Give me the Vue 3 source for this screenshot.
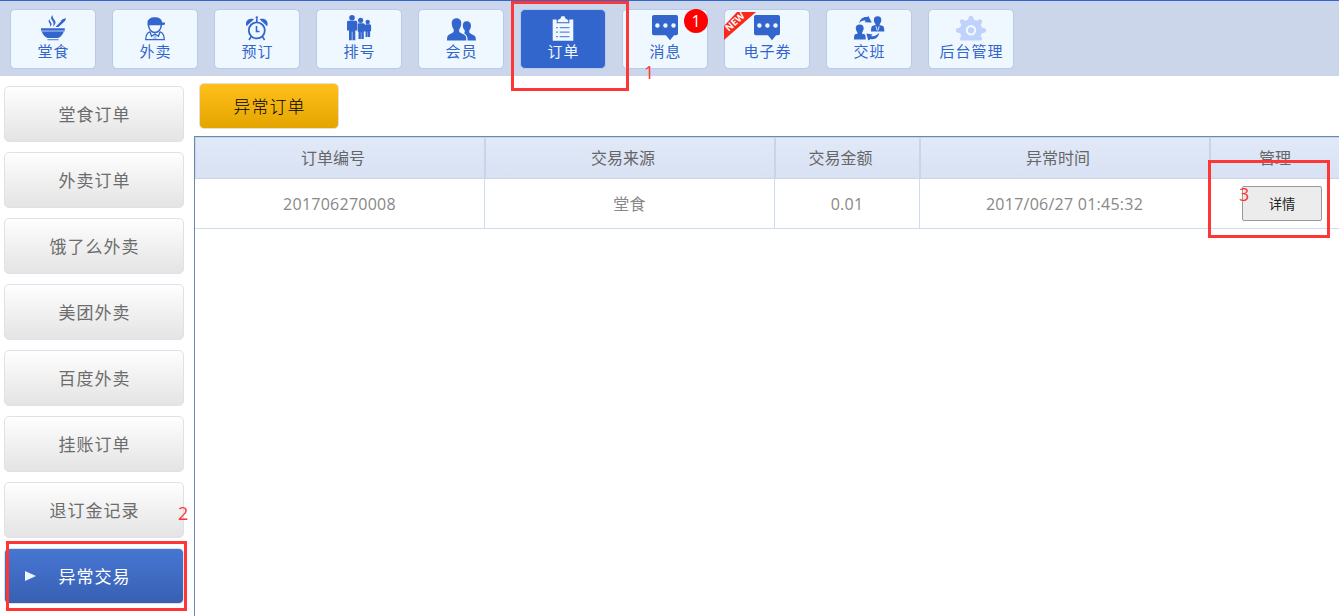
<template>
  <div class="page">
    <header class="top-nav">
      <button
        v-for="item in navItems"
        :key="item.key"
        class="nav-item"
        :class="{ active: item.key === currentNav }"
        @click="currentNav = item.key"
      >
        <svg class="nav-icon" viewBox="0 0 32 28" fill="currentColor">
          <g v-if="item.key === 'dine'">
            <path d="M4 14.200h23.800v2.200H4zM5 18h21.600c-.8 2.700-2.800 4.700-5.400 6H10.600C7.800 22.700 5.800 20.700 5 18z" />
            <path d="M4.300 16.400h23.200v1.600H4.600z" opacity=".65" />
            <path d="M10.500 25h11v1.300h-11z" opacity=".7" />
            <path d="M18.500 13l5.300-5.500c.4-2 2.600-2.600 5-3.500.3 1.700-.8 3.100-3 5L21.500 13z" />
            <path d="M15.500 1c-1.700 2-2 3.400-.6 5.100 1.500 2 2.300 3.600 1 6.700 3.300-2.700 3.200-4.700 1.400-7-1.200-1.600-1.800-2.700-1.800-4.800zM12.500 5c-1.400 1.700-1.100 2.700-.1 4 .7 1.100 1 2 .4 3.700 2.400-1.600 2.200-3 .9-4.700-.8-1-1.200-1.700-1.200-3z" />
          </g>
          <g v-else-if="item.key === 'takeout'">
            <path d="M8.500 11.200V8.700C8.500 5.200 11.500 3.300 16 3.300c4 0 6.800 1.900 7.200 5.100H26v2.200l-3 .7z" />
            <path d="M9.500 11c.2 4.500 3 7.400 6.400 7.400s6.200-2.900 6.400-7.400" fill="none" stroke="currentColor" stroke-width="1.500" />
            <path d="M11 17.800c-3.300.8-4.200 3.600-4.300 7.900h18.600c-.1-4.300-1-7.100-4.300-7.900M11 17.800l1.500 4.400 3.400-2.200 3.600 2.200 1.500-4.400" fill="none" stroke="currentColor" stroke-width="1.300" />
            <path d="M15 20.500h2l1 5h-4z" opacity=".35" />
          </g>
          <g v-else-if="item.key === 'booking'">
            <circle cx="15.800" cy="16.400" r="8" fill="none" stroke="currentColor" stroke-width="1.800" />
            <path d="M5.500 12.300C3.500 7.500 7.500 3.300 13 5.300zM26.100 12.300c2-4.800-2-9-7.500-7z" />
            <path d="M15.800 8.500V4.500M15.500 12v5.500h3M10.200 22.500L8 26M21.400 22.500l2.200 3.500" fill="none" stroke="currentColor" stroke-width="1.600" />
            <circle cx="15.800" cy="3.400" r="1.200" />
          </g>
          <g v-else-if="item.key === 'queue'">
            <circle cx="9" cy="3.700" r="2.800" />
            <path d="M5.500 6.700h7.200c1 0 1.600.7 1.600 1.600v8.300h-2v9.700H9.400v-8.600h-.6v8.600H6v-9.700H4V8.300c0-.9.6-1.600 1.500-1.600z" />
            <circle cx="17.600" cy="6.300" r="2.600" />
            <path d="M15.800 9.200h4.300c1.300 0 1.900.8 1.900 1.800v6.600h-1.200V25h-2.500v-6.800h-.4V25h-2.400v-7l-.7-.3V9.800z" />
            <circle cx="24.700" cy="8" r="2.200" />
            <path d="M23.300 10.300h3c1.200 0 1.800.6 1.800 1.500v5.400h-1V23h-2.200v-5.300h-.3V23h-2v-5.500h-.6v-6.400z" />
          </g>
          <g v-else-if="item.key === 'member'">
            <path d="M11.500 4.300c3.200 0 5.100 2.300 4.700 5.600-.2 2.300-.9 4-2 5.300v2.300c.8 2 5.500 2.700 6.500 4.600.5 1 .6 2.900.6 4.500H2c0-1.600.1-3.500.6-4.500 1-1.900 5.300-2.600 6.100-4.600v-2.300c-1.100-1.300-1.700-3-1.900-5.300-.4-3.300 1.500-5.600 4.700-5.600z" />
            <path d="M21.500 7.200c2.800 0 4.700 1.700 4.500 4.900-.1 1.900-.8 3.300-1.700 4.500v1.900c.8 1.700 4.900 2.200 5.900 4 .5.900.7 2.600.7 4.100h-8.300c0-3.600-.7-5.500-3.300-7l.6-2.900c-1.200-1.300-2-2.700-2.100-4.600-.2-3.200 1.200-4.900 3.700-4.900z" />
          </g>
          <g v-else-if="item.key === 'order'">
            <path d="M5.700 5.500h4v3.800h12.600V5.500h4v21.200H5.700z" />
            <path d="M10.700 8.300V6.200l2.600-1.700c.7-.5.800-1.200 1-2.300h3.400c.2 1.100.3 1.800 1 2.300l2.600 1.700v2.100z" />
            <path d="M9 13.700h1.900M12.700 13.700h9.800M9 18.200h1.900M12.700 18.200h9.800M9 22.600h1.900M12.700 22.600h9.800" stroke="#36c" stroke-width="1.300" opacity=".75" />
          </g>
          <g v-else-if="item.key === 'message' || item.key === 'coupon'">
            <path d="M5 1h22c1.300 0 2 .7 2 2v16.300c0 1.300-.7 2-2 2h-1.900L21 26.200l-4.100-4.900H5c-1.300 0-2-.7-2-2V3c0-1.300.7-2 2-2z" />
            <g fill="#f0f7ff">
              <circle cx="8.400" cy="11.500" r="2.200" />
              <circle cx="16.400" cy="11.500" r="2.200" />
              <circle cx="24.500" cy="11.500" r="2.200" />
            </g>
          </g>
          <g v-else-if="item.key === 'shift'">
            <path d="M6.700 10.500c2.700 0 4.200 1.600 4 4.100-.1 1.500-.7 2.800-1.600 3.900v1.200l2.500.6c1 .5 1.100 3 1.100 5.200H1c0-2.200.2-4.700 1.100-5.200l2.300-.6v-1.200c-.9-1.100-1.500-2.400-1.600-3.900-.2-2.500 1.200-4.100 3.900-4.100z" />
            <path d="M24.600 2.300c2.500 0 3.900 1.500 3.700 3.900-.1 1.600-.7 2.700-1.600 3.700v1l3.300 1c1.100.6 1.300 3.400 1.300 5.500H18c0-2.100.2-4.900 1.200-5.500l3.300-1v-1c-1-1-1.500-2.100-1.600-3.700-.2-2.400 1.200-3.900 3.700-3.900z" />
            <path d="M23 12.300l1.200 4.200M26.200 12.300L25 16.500" fill="none" stroke="#f0f8ff" stroke-width=".9" />
            <path d="M6 9.300C7.300 4.500 10.500 2.300 14.500 3.100l.7-1.300 3.600 6.700-7.200-.2 1.200-1.500C10.300 6 8 7 6 9.300zM26.300 18.800c-.8 4.700-4.200 7.200-8.400 6.300l-2.700 1.500-1.800-7.200 6.200 1.200-1.500 1.500c2.700.8 5.500-.5 8.200-3.300z" />
          </g>
          <g v-else class="gear">
            <path
              d="M12.900 5.700L14.200 2.500c.8-1 2.800-1 3.600 0l1.300 3.200 2.600 1.100 3.200-1.500c1.300 0 2.400 1.100 2.400 2.400l-1.600 3 1.200 2.700 3.500 1.200c1 .8 1 2.800 0 3.600l-3.500 1.200-1.200 2.600 1.500 2.600-.9 1.800H5.700l-.9-1.800 1.500-2.600-1.200-2.600-3.500-1.200c-1-.8-1-2.800 0-3.600l3.500-1.200 1.200-2.700-1.600-3c0-1.300 1.100-2.400 2.400-2.400l3.200 1.500z"
            />
            <circle cx="16" cy="16.300" r="4.200" fill="none" stroke="#f0f8ff" stroke-width="2.100" />
          </g>
        </svg>
        <span class="nav-label">{{ item.label }}</span>
        <span v-if="item.count" class="badge">{{ item.count }}</span>
        <span v-if="item.isNew" class="ribbon"><b>NEW</b></span>
      </button>
    </header>

    <div class="main">
      <aside class="side-menu">
        <button
          v-for="menu in sideMenus"
          :key="menu"
          class="side-item"
          :class="{ active: menu === currentMenu }"
          @click="currentMenu = menu"
        >
          {{ menu }}
        </button>
      </aside>

      <section class="content">
        <div class="toolbar">
          <button class="btn-abnormal">异常订单</button>
        </div>
        <div class="table">
          <div class="row head">
            <div v-for="col in columns" :key="col" class="cell">{{ col }}</div>
          </div>
          <div v-for="order in orders" :key="order.no" class="row">
            <div class="cell">{{ order.no }}</div>
            <div class="cell source">{{ order.source }}</div>
            <div class="cell">{{ order.amount }}</div>
            <div class="cell">{{ order.time }}</div>
            <div class="cell action"><button class="btn-detail">详情</button></div>
          </div>
        </div>
      </section>
    </div>

    <!-- step marks laid over the page -->
    <div class="mark mark-order"></div>
    <div class="mark mark-menu"></div>
    <div class="mark mark-detail"></div>
    <span class="step step-1">1</span>
    <span class="step step-2">2</span>
    <span class="step step-3">3</span>
  </div>
</template>

<script setup>
import { ref } from 'vue'

const currentNav = ref('order')
const currentMenu = ref('异常交易')

const navItems = [
  { key: 'dine', label: '堂食' },
  { key: 'takeout', label: '外卖' },
  { key: 'booking', label: '预订' },
  { key: 'queue', label: '排号' },
  { key: 'member', label: '会员' },
  { key: 'order', label: '订单' },
  { key: 'message', label: '消息', count: 1 },
  { key: 'coupon', label: '电子券', isNew: true },
  { key: 'shift', label: '交班' },
  { key: 'admin', label: '后台管理' },
]

const sideMenus = [
  '堂食订单',
  '外卖订单',
  '饿了么外卖',
  '美团外卖',
  '百度外卖',
  '挂账订单',
  '退订金记录',
  '异常交易',
]

const columns = ['订单编号', '交易来源', '交易金额', '异常时间', '管理']

const orders = ref([
  { no: '201706270008', source: '堂食', amount: '0.01', time: '2017/06/27 01:45:32' },
])
</script>

<style>
body {
  overflow: hidden;
  background: #fff;
}
</style>

<style scoped>
.page {
  position: relative;
  display: flex;
  flex-direction: column;
  height: 616px;
  overflow: hidden;
  font-family: "Open Sans", "Noto Sans CJK SC", sans-serif;
}

button {
  box-sizing: border-box;
  margin: 0;
  padding: 0;
  font-family: inherit;
  cursor: pointer;
}

.top-nav {
  box-sizing: border-box;
  display: flex;
  flex: none;
  gap: 16px;
  height: 76px;
  padding: 8px 10px 0;
  border-top: 1px solid #36c;
  background: #ccd6ea;
}

.nav-item {
  position: relative;
  display: flex;
  flex-direction: column;
  align-items: center;
  width: 86px;
  height: 60px;
  padding-top: 4px;
  border: 1px solid #b9cbed;
  border-radius: 5px;
  background: #f0f8ff;
  color: #36c;
}

.nav-item.active {
  background: #36c;
  color: #f0f7ff;
}

.nav-icon {
  flex: none;
  width: 32px;
  height: 28px;
}

.gear {
  color: #c0d2fc;
}

.nav-label {
  padding-left: 1px;
  font-size: 15px;
  line-height: 18px;
  letter-spacing: 1px;
  white-space: nowrap;
}

.badge {
  position: absolute;
  top: -1px;
  right: -1px;
  width: 24px;
  height: 24px;
  border-radius: 50%;
  background: #f00;
  color: #fff;
  font-size: 16px;
  line-height: 25px;
  text-align: center;
}

.ribbon {
  position: absolute;
  top: 2px;
  left: -1px;
  width: 32px;
  height: 28px;
  background: #f9291c;
  clip-path: polygon(13px 0, 100% 0, 0 100%, 0 14px);
}

.ribbon b {
  position: absolute;
  top: 4px;
  left: -2px;
  width: 26px;
  color: #fff;
  font-size: 9.500px;
  line-height: 12px;
  text-align: center;
  transform: rotate(-42deg);
}

.main {
  display: flex;
  flex: 1;
  min-height: 0;
}

.side-menu {
  display: flex;
  flex: none;
  flex-direction: column;
  gap: 10px;
  width: 180px;
  padding: 10px 10px 0 4px;
}

.side-item {
  position: relative;
  flex: none;
  height: 56px;
  padding: 0 0 2px 1px;
  border: 1px solid #dfe1ea;
  border-radius: 5px;
  background: linear-gradient(#fefefe, #e4e4e4);
  color: #6c6c6c;
  font-size: 17px;
  letter-spacing: 1px;
}

.side-item.active {
  background: linear-gradient(#4676d3, #3860b2);
  color: #fff;
}

.side-item.active::before {
  content: "";
  position: absolute;
  top: 22px;
  left: 20px;
  border: solid transparent;
  border-width: 5.5px 0 5.5px 11px;
  border-left-color: #f0f4ff;
}

.content {
  display: flex;
  flex: 1;
  flex-direction: column;
  min-width: 0;
}

.toolbar {
  flex: none;
  height: 53px;
  padding: 7px 5px 0;
}

.btn-abnormal {
  width: 140px;
  height: 46px;
  padding: 0 0 2px 1px;
  border: 1px solid #e5e0d0;
  border-radius: 5px;
  background: linear-gradient(#ffc01c, #e5a500);
  color: #000;
  font-size: 17px;
  font-weight: 300;
  letter-spacing: 1px;
}

.table {
  flex: 1;
  border-top: 1px solid #648bb0;
  border-left: 1px solid #648bb0;
}

.row {
  display: grid;
  grid-template-columns: 290px 290px 145px 290px 1fr;
  height: 50px;
}

.head {
  height: 42px;
}

.cell {
  display: flex;
  box-sizing: border-box;
  align-items: center;
  justify-content: center;
  border-right: 1px solid #cfdceb;
  border-bottom: 1px solid #cfdceb;
  color: #888;
  font-size: 16px;
  letter-spacing: 0.25px;
}

.source {
  padding-bottom: 1px;
}

.head .cell {
  padding: 0 14px 2px 0;
  border: 1px solid #c8d5e9;
  background: linear-gradient(#e1e9f8, #d8e2f4);
  color: #666;
  letter-spacing: 0;
}

.head .cell:last-child {
  padding-right: 0;
}

.cell:last-child {
  border-right: 0;
}

.cell.action {
  justify-content: flex-start;
  padding-left: 32px;
}

.btn-detail {
  flex: none;
  width: 80px;
  height: 35px;
  padding-bottom: 1px;
  border: 1px solid #999;
  border-radius: 2px;
  background: #ececec;
  color: #222;
  font-size: 13.300px;
}

.mark {
  position: absolute;
  box-sizing: border-box;
  border: 3px solid #ff3636;
  pointer-events: none;
}

.mark-order {
  top: 1px;
  left: 511px;
  width: 118px;
  height: 90px;
}

.mark-menu {
  top: 541px;
  left: 6px;
  width: 181px;
  height: 70px;
}

.mark-detail {
  top: 160px;
  left: 1208px;
  width: 122px;
  height: 78px;
}

.step {
  position: absolute;
  color: #ff3636;
  font-size: 18px;
  font-weight: 500;
  line-height: 20px;
}

.step-1 {
  top: 62px;
  left: 644px;
}

.step-2 {
  top: 503px;
  left: 178px;
}

.step-3 {
  top: 184px;
  left: 1239px;
}
</style>
